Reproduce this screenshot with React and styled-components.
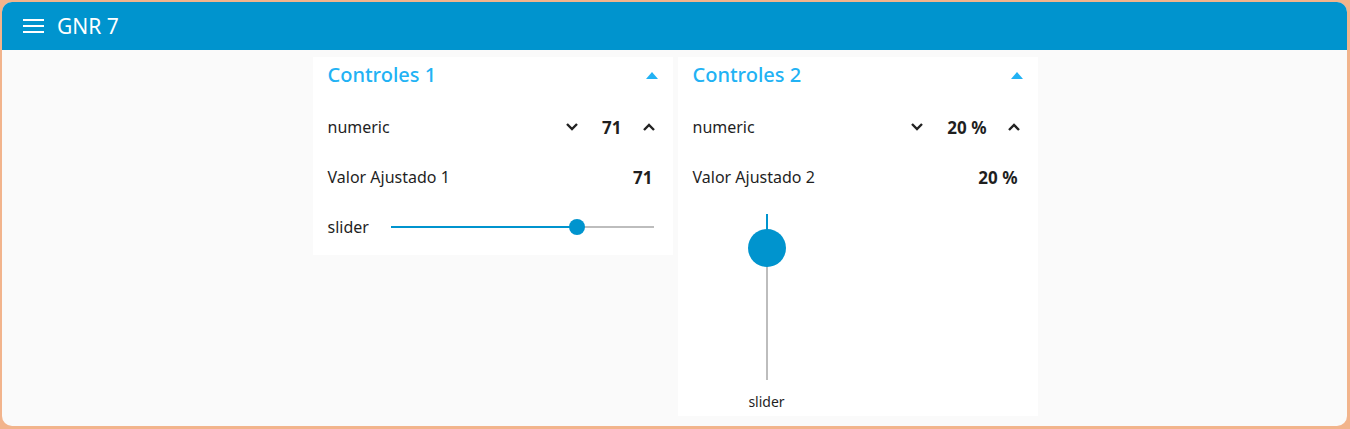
import React from 'react'
import styled, { createGlobalStyle } from 'styled-components'

const GlobalStyle = createGlobalStyle`
	html, body {
		margin: 0;
		padding: 0;
		background: #f2b48c;
	}
	body {
		font-family: 'Noto Sans', 'Open Sans', sans-serif;
		color: #1f1f1f;
	}
`

const Frame = styled.div`
	padding: 2px 3px 3px 2px;
	height: 429px;
	box-sizing: border-box;
`

const Window = styled.div`
	height: 100%;
	border-radius: 10px;
	overflow: hidden;
	background: #fafafa;
	display: flex;
	flex-direction: column;
`

const Toolbar = styled.header`
	height: 48px;
	flex: none;
	background: #0094ce;
	color: #fff;
	display: flex;
	align-items: center;
	padding-left: 21px;
	gap: 12px;
`

const Title = styled.h1`
	margin: 0;
	font-size: 21px;
	font-weight: 400;
`

const Content = styled.main`
	display: flex;
	justify-content: center;
	align-items: flex-start;
	gap: 5px;
	padding-top: 7px;
	padding-left: 1px;
`

const Card = styled.section`
	width: 360px;
	background: #fff;
	padding-bottom: 4px;
`

const CardHeader = styled.div`
	height: 34px;
	display: flex;
	align-items: center;
	justify-content: space-between;
	padding: 0 15px;
	margin-bottom: 12px;
`

const CardTitle = styled.h2`
	margin: 0;
	font-size: 20px;
	font-weight: 500;
	color: #22b2f4;
`

const Caret = styled.span`
	width: 0;
	height: 0;
	border-left: 6.5px solid transparent;
	border-right: 6.5px solid transparent;
	border-bottom: 7px solid #22b2f4;
	margin-top: 2px;
`

const Rows = styled.div`
	display: flex;
	flex-direction: column;
	gap: 2px;
`

const Row = styled.div`
	height: 48px;
	display: flex;
	align-items: center;
	justify-content: space-between;
	padding: 0 ${(p) => p.$right ?? 20}px 0 15px;
	font-size: 16px;
`

const Value = styled.span`
	font-weight: 700;
	font-size: 17px;
`

const Stepper = styled.div`
	display: flex;
	align-items: center;
`

const StepButton = styled.button`
	width: 32px;
	height: 32px;
	border: none;
	background: transparent;
	padding: 0;
	display: flex;
	align-items: center;
	justify-content: center;
	cursor: pointer;
`

const StepValue = styled(Value)`
	margin: 0 11px 0 14px;
`

const Track = styled.div`
	flex: 1;
	margin-left: 22px;
	height: 2px;
	background: #bdbdbd;
	position: relative;
`

const TrackFill = styled.div`
	height: 100%;
	background: #0094ce;
`

const Thumb = styled.div`
	position: absolute;
	width: ${(p) => p.$size}px;
	height: ${(p) => p.$size}px;
	border-radius: 50%;
	background: #0094ce;
	transform: translate(-50%, -50%);
`

const VerticalWidget = styled.div`
	height: 209px;
	padding-left: 15px;
	display: flex;
`

const VerticalColumn = styled.div`
	width: 148px;
	display: flex;
	flex-direction: column;
	align-items: center;
	padding-top: 11px;
`

const VerticalTrack = styled.div`
	width: 2px;
	height: 166px;
	background: #bdbdbd;
	position: relative;
`

const VerticalLabel = styled.span`
	margin-top: 12px;
	font-size: 14px;
`

const Menu = () => (
	<svg width="22" height="16" viewBox="0 0 22 16">
		<rect x="0" y="1" width="21" height="2" fill="#fff" />
		<rect x="0" y="7" width="21" height="2" fill="#fff" />
		<rect x="0" y="13" width="21" height="2" fill="#fff" />
	</svg>
)

const Chevron = ({ up }) => (
	<svg width="14" height="10" viewBox="0 0 14 10">
		<path
			d={up ? 'M2 8 L7 3 L12 8' : 'M2 2 L7 7 L12 2'}
			fill="none"
			stroke="#222"
			strokeWidth="2.4"
		/>
	</svg>
)

const NumericRow = ({ value }) => (
	<Row $right={8}>
		<span>numeric</span>
		<Stepper>
			<StepButton>
				<Chevron />
			</StepButton>
			<StepValue>{value}</StepValue>
			<StepButton>
				<Chevron up />
			</StepButton>
		</Stepper>
	</Row>
)

const Group = ({ title, children }) => (
	<Card>
		<CardHeader>
			<CardTitle>{title}</CardTitle>
			<Caret />
		</CardHeader>
		<Rows>{children}</Rows>
	</Card>
)

const App = () => {
	const pct1 = 71
	const vTop = 34

	return (
		<>
			<GlobalStyle />
			<Frame>
				<Window>
					<Toolbar>
						<Menu />
						<Title>GNR 7</Title>
					</Toolbar>
					<Content>
						<Group title="Controles 1">
							<NumericRow value="71" />
							<Row>
								<span>Valor Ajustado 1</span>
								<Value>71</Value>
							</Row>
							<Row $right={19}>
								<span>slider</span>
								<Track>
									<TrackFill style={{ width: `${pct1}%` }} />
									<Thumb $size={16} style={{ left: `${pct1}%`, top: '1px' }} />
								</Track>
							</Row>
						</Group>
						<Group title="Controles 2">
							<NumericRow value="20 %" />
							<Row>
								<span>Valor Ajustado 2</span>
								<Value>20 %</Value>
							</Row>
							<VerticalWidget>
								<VerticalColumn>
									<VerticalTrack>
										<TrackFill style={{ height: `${vTop}px` }} />
										<Thumb $size={38} style={{ left: '1px', top: `${vTop}px` }} />
									</VerticalTrack>
									<VerticalLabel>slider</VerticalLabel>
								</VerticalColumn>
							</VerticalWidget>
						</Group>
					</Content>
				</Window>
			</Frame>
		</>
	)
}

export default App
